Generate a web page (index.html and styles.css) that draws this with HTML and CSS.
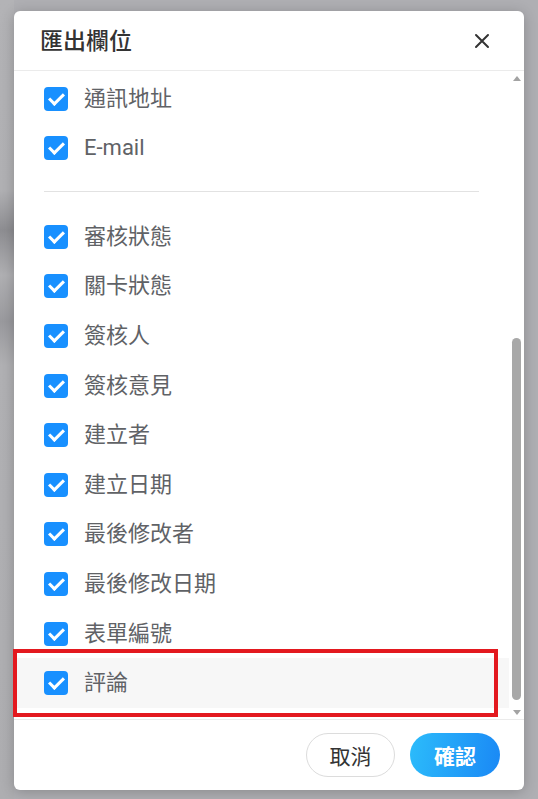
FILE: index.html
```html
<!DOCTYPE html>
<html lang="zh-Hant">
<head>
<meta charset="utf-8">
<title>匯出欄位</title>
<link rel="stylesheet" href="styles.css">
</head>
<body>
<div class="dialog">
  <div class="dialog-header">
    <h2 class="dialog-title">匯出欄位</h2>
    <button class="close-btn" aria-label="關閉">
      <svg viewBox="0 0 16 16" width="16" height="16"><path d="M2 2L14 14M14 2L2 14" stroke="#333" stroke-width="2" fill="none" stroke-linecap="round"/></svg>
    </button>
  </div>
  <div class="dialog-body">
    <div class="field-list">
      <label class="field"><span class="cb"></span><span class="label">通訊地址</span></label>
      <label class="field"><span class="cb"></span><span class="label">E-mail</span></label>
      <div class="divider"></div>
      <label class="field"><span class="cb"></span><span class="label">審核狀態</span></label>
      <label class="field"><span class="cb"></span><span class="label">關卡狀態</span></label>
      <label class="field"><span class="cb"></span><span class="label">簽核人</span></label>
      <label class="field"><span class="cb"></span><span class="label">簽核意見</span></label>
      <label class="field"><span class="cb"></span><span class="label">建立者</span></label>
      <label class="field"><span class="cb"></span><span class="label">建立日期</span></label>
      <label class="field"><span class="cb"></span><span class="label">最後修改者</span></label>
      <label class="field"><span class="cb"></span><span class="label">最後修改日期</span></label>
      <label class="field"><span class="cb"></span><span class="label">表單編號</span></label>
      <label class="field field-hover"><span class="cb"></span><span class="label">評論</span></label>
    </div>
    <div class="scrollbar" aria-hidden="true">
      <div class="sb-arrow"><span class="tri tri-up"></span></div>
      <div class="sb-track"><div class="sb-thumb" style="margin-top:252px;height:362px"></div></div>
      <div class="sb-arrow"><span class="tri tri-down"></span></div>
    </div>
  </div>
  <div class="dialog-footer">
    <button class="btn btn-cancel">取消</button>
    <button class="btn btn-primary">確認</button>
  </div>
</div>
<div class="annotation"></div>
</body>
</html>
```

FILE: styles.css
```css
* { box-sizing: border-box; }

html, body {
  margin: 0;
  height: 100%;
}

body {
  font-family: Roboto, "Noto Sans CJK TC", sans-serif;
  background:
    linear-gradient(to bottom,
      #b3b3b6 0px, #b1b1b4 190px, #8e8e92 230px, #b0b0b3 275px,
      #9a9a9e 322px, #b1b1b4 365px, #aeaeb1 799px) left top / 14px 100% no-repeat,
    #afafb3;
  padding: 11px 14px 9px 14px;
  overflow: hidden;
}

.dialog {
  width: 510px;
  height: 779px;
  background: #fff;
  border-radius: 6px;
  box-shadow: 0 2px 14px rgba(0, 0, 0, 0.22);
  display: flex;
  flex-direction: column;
  overflow: hidden;
}

.dialog-header {
  height: 60px;
  flex: none;
  display: flex;
  align-items: center;
  justify-content: space-between;
  padding: 0 26px 0 26px;
  border-bottom: 1px solid #ebebeb;
}

.dialog-title {
  margin: 0;
  font-size: 23px;
  font-weight: 500;
  color: #333;
  line-height: 1;
  padding-top: 1px;
}

.close-btn {
  width: 20px;
  height: 20px;
  padding: 0;
  border: 0;
  background: none;
  display: flex;
  align-items: center;
  justify-content: center;
  margin-right: 6px;
  margin-top: 1px;
}

.dialog-body {
  flex: 1;
  min-height: 0;
  display: flex;
}

.field-list {
  flex: 1;
  min-width: 0;
  padding: 3px 0 11px 0;
  display: flex;
  flex-direction: column;
  justify-content: flex-end;
}

.field {
  height: 49.6px;
  flex: none;
  display: flex;
  align-items: center;
  padding: 0 30px;
  gap: 16px;
  font-size: 22px;
  color: #606266;
}

.field-hover {
  background: #f7f7f7;
}

.cb {
  width: 24px;
  height: 24px;
  border-radius: 4px;
  background: #1890ff;
  position: relative;
  flex: none;
}

.cb::after {
  content: "";
  position: absolute;
  left: 5px;
  top: 6px;
  width: 12px;
  height: 6px;
  border-left: 3px solid #fff;
  border-bottom: 3px solid #fff;
  transform: rotate(-45deg);
}

.label {
  line-height: 1;
}

.divider {
  flex: none;
  height: 1px;
  background: #e2e2e2;
  margin: 18px 30px 20px 30px;
}

.scrollbar {
  width: 15px;
  flex: none;
  display: flex;
  flex-direction: column;
}

.sb-arrow {
  height: 15px;
  flex: none;
  display: flex;
  align-items: center;
  justify-content: center;
}

.tri {
  width: 0;
  height: 0;
  border-left: 4.5px solid transparent;
  border-right: 4.5px solid transparent;
}

.tri-up {
  border-bottom: 5px solid #a3a3a3;
  margin-top: -1px;
}

.tri-down {
  border-top: 5px solid #a3a3a3;
  margin-top: 1px;
}

.sb-track {
  flex: 1;
  padding: 0 3px;
}

.sb-thumb {
  width: 9px;
  border-radius: 5px;
  background: #a8a8a8;
}

.dialog-footer {
  height: 71px;
  flex: none;
  border-top: 1px solid #ebebeb;
  display: flex;
  align-items: center;
  justify-content: flex-end;
  padding: 0 24px 0 0;
  gap: 15px;
}

.btn {
  height: 44px;
  width: 89px;
  border-radius: 22px;
  font-family: Roboto, "Noto Sans CJK TC", sans-serif;
  font-size: 21px;
  cursor: pointer;
  padding: 0;
}

.btn-cancel {
  background: #fff;
  border: 1px solid #dcdcdc;
  color: #333;
}

.btn-primary {
  width: 90px;
  border: 0;
  color: #fff;
  font-weight: 700;
  background: linear-gradient(100deg, #2cbcfb 0%, #1a88f5 100%);
}

.annotation {
  position: absolute;
  left: 13px;
  top: 649px;
  width: 485px;
  height: 68px;
  border: 4px solid #e3191f;
  pointer-events: none;
}
```
